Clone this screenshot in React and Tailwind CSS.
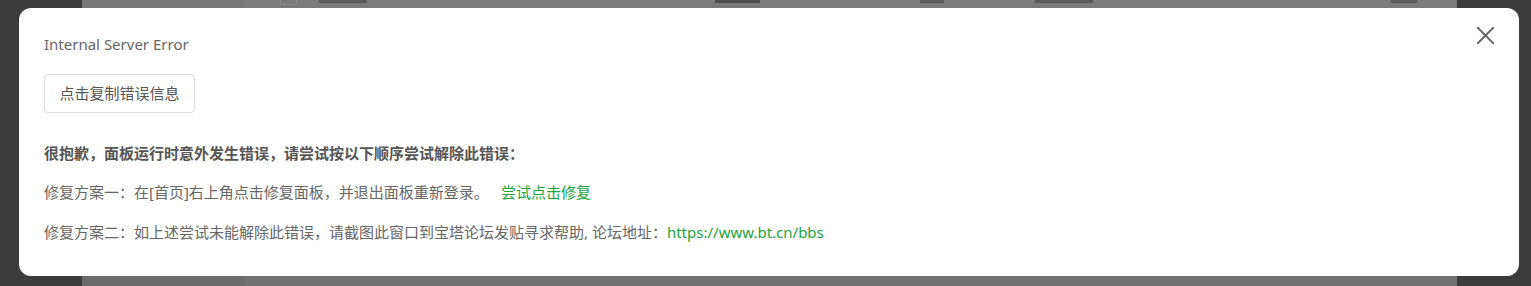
import { X } from 'lucide-react';

const font = { fontFamily: '"Noto Sans", "Noto Sans CJK SC", sans-serif' };

// Dimmed page behind the dialog
const Backdrop = () => (
  <div className="flex h-full w-full">
    <div className="w-[82px] bg-[#3c3c3c]" />
    <div className="w-[163px] bg-gradient-to-b from-[#777777] to-[#6b6b6b]" />
    <div className="relative flex-1 bg-gradient-to-b from-[#7a7a7a] to-[#727272]">
      <div className="absolute left-0 right-0 top-0 flex h-[6px] items-start">
        <div className="ml-[35px] h-[5px] w-[17px] rounded-b-[2px] border border-t-0 border-[#8a8a8a]" />
        <div className="ml-[22px] h-[3px] w-[48px] bg-[#5a5a5a]" />
        <div className="ml-[348px] h-[3px] w-[45px] bg-[#4e4e4e]" />
        <div className="ml-[160px] h-[3px] w-[24px] bg-[#5a5a5a]" />
        <div className="ml-[91px] h-[3px] w-[58px] bg-[#5a5a5a]" />
        <div className="ml-[298px] h-[3px] w-[26px] bg-[#5a5a5a]" />
      </div>
    </div>
    <div className="w-[74px] bg-[#3c3c3c]" />
  </div>
);

const ErrorDialog = () => (
  <div
    className="absolute left-[19px] top-[8px] h-[268px] w-[1500px] rounded-[12px] bg-white pl-[25px] pt-[26px] text-[15px] text-[#666]"
    style={font}
  >
    <button className="absolute right-[18px] top-[12px] text-[#666]">
      <X size={31} strokeWidth={1.4} />
    </button>
    <div className="leading-[20px]">Internal Server Error</div>
    <div className="mt-[20px] flex h-[39px] w-[151px] items-center justify-center rounded-[4px] border border-[#dcdcdc] text-[#555]">
      点击复制错误信息
    </div>
    <div className="mt-[30px] font-bold leading-[20px] text-[#555]">
      很抱歉，面板运行时意外发生错误，请尝试按以下顺序尝试解除此错误：
    </div>
    <div className="mt-[19px] leading-[20px]">
      修复方案一：在[首页]右上角点击修复面板，并退出面板重新登录。
      <span className="ml-[12px] text-[#20a53a]">尝试点击修复</span>
    </div>
    <div className="mt-[20px] leading-[20px]">
      修复方案二：如上述尝试未能解除此错误，请截图此窗口到宝塔论坛发贴寻求帮助, 论坛地址：
      <span className="text-[#20a53a]">https://www.bt.cn/bbs</span>
    </div>
  </div>
);

export default function App() {
  return (
    <div className="relative h-[286px] w-full overflow-hidden">
      <Backdrop />
      <ErrorDialog />
    </div>
  );
}
